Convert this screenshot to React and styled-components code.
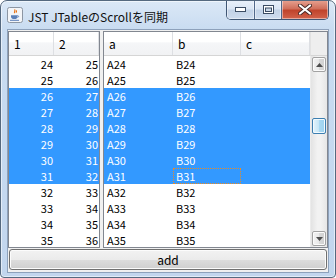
import styled, { createGlobalStyle } from 'styled-components'

const GlobalStyle = createGlobalStyle`
  html, body { margin: 0; padding: 0; background: #fff; }
  body {
    font-family: 'Noto Sans CJK JP', 'Noto Sans', sans-serif;
    font-size: 12px; color: #000;
  }
  * { box-sizing: border-box; }
`

const Frame = styled.div`
  width: 336px; height: 278px;
  display: flex; flex-direction: column;
  padding: 0 6px 4px 6px;
  border: 1px solid #55697f; border-radius: 7px 7px 4px 4px;
  background: linear-gradient(180deg, #dbe8f6 0px, #c9dcf1 28px, #c2d6ee 100%);
  box-shadow: inset 0 0 0 1px rgba(255,255,255,0.55);
  overflow: hidden;
`
const TitleBar = styled.div`
  height: 28px; flex: none;
  display: flex; align-items: center;
`
const AppIcon = styled.svg`
  width: 16px; height: 16px; flex: none;
  align-self: flex-start; margin-top: 6px;
`
const Title = styled.span`
  margin-left: 5px; margin-top: 2px;
  font-size: 12px; color: #101010; white-space: nowrap;
`
const Caption = styled.div`
  margin-left: auto; margin-right: 0px;
  align-self: flex-start; margin-top: -1px;
  display: flex; height: 20px;
  border: 1px solid #3f5674; border-top: none;
  border-radius: 0 0 5px 5px; overflow: hidden;
`
const CapBtn = styled.div`
  width: ${p => p.$w}px; height: 100%;
  display: flex; align-items: center; justify-content: center;
  border-left: ${p => (p.$first ? 'none' : '1px solid #51688a')};
  background: ${p => p.$close
    ? 'linear-gradient(180deg, #e8a493 0%, #d0705c 45%, #c0442c 55%, #d2634b 100%)'
    : 'linear-gradient(180deg, #eaf1fa 0%, #dbe6f4 45%, #c3d3e7 55%, #cedcee 100%)'};
  box-shadow: inset 0 0 0 1px rgba(255,255,255,0.45);
`

const Client = styled.div`
  flex: 1;
  display: flex; flex-direction: column; gap: 1px;
  padding: 1px 0 2px;
  border: 1px solid #8da1bb;
  background: #f0f0f0;
`
const TablesRow = styled.div`
  height: 217px; flex: none;
  display: flex; gap: 3px;
`
const Pane = styled.div`
  width: ${p => (p.$w ? `${p.$w}px` : 'auto')};
  flex: ${p => (p.$w ? 'none' : '1')};
  display: grid;
  grid-template-columns: ${p => (p.$scroll ? '1fr 17px' : '1fr')};
  grid-template-rows: 24px 1fr;
  border: 1px solid #828790;
  background: #fff;
  overflow: hidden;
`
const HeaderRow = styled.div`
  display: grid;
  grid-template-columns: ${p => p.$cols};
  border-bottom: 1px solid #d5d5d5;
  background: linear-gradient(180deg, #ffffff 0%, #ffffff 45%, #f5f6f8 46%, #f1f2f4 100%);
`
const HeadCell = styled.div`
  padding-left: 5px;
  line-height: 23px; font-size: 12px;
  border-right: 1px solid #dddfe3;
`
const Corner = styled.div`
  background: #eeeeee;
  border-bottom: 1px solid #d5d5d5;
  border-left: 1px solid #e2e2e2;
`
const Body = styled.div`
  overflow: hidden;
`
const Row = styled.div`
  height: 16px;
  display: grid;
  grid-template-columns: ${p => p.$cols};
  background: ${p => (p.$sel ? '#3399ff' : '#fff')};
  color: ${p => (p.$sel ? '#fff' : '#000')};
`
const Cell = styled.div`
  padding: ${p => (p.$num ? '0 1px 0 0' : '0 0 0 3px')};
  text-align: ${p => (p.$num ? 'right' : 'left')};
  font-size: 11px; line-height: 16px;
  white-space: nowrap;
  outline: ${p => (p.$focus ? '1px dotted #f08a1c' : 'none')};
  outline-offset: -1px;
`

const ScrollBar = styled.div`
  display: flex; flex-direction: column;
  padding: 1px;
  background: linear-gradient(90deg, #e3e3e3 0%, #f2f2f2 40%, #f2f2f2 60%, #e6e6e6 100%);
  border-left: 1px solid #ececec;
`
const ArrowBtn = styled.div`
  height: 15px; flex: none;
  display: flex; align-items: center; justify-content: center;
  border: 1px solid #a2a2a2; border-radius: 2px;
  background: linear-gradient(90deg, #f3f3f3 0%, #e8e8e8 50%, #d9d9d9 51%, #d0d0d0 100%);
  box-shadow: inset 0 0 0 1px #fbfbfb;
`
const Track = styled.div`
  flex: 1;
`
const Thumb = styled.div`
  height: 16px;
  border: 1px solid #3c7fb1; border-radius: 2px;
  background: linear-gradient(90deg, #e3f4fc 0%, #c4e5f6 50%, #a9d9f2 51%, #9dd2ef 100%);
  box-shadow: inset 0 0 0 1px #f2fafe;
`

const AddButton = styled.button`
  height: 21px; flex: none;
  margin: 0 1px;
  border: 1px solid #707070; border-radius: 3px;
  background: linear-gradient(180deg, #f2f2f2 0%, #ebebeb 50%, #dddddd 51%, #cfcfcf 100%);
  box-shadow: inset 0 0 0 1px #fcfcfc;
  font-family: 'Noto Sans CJK JP', 'Noto Sans', sans-serif;
  font-size: 12px; color: #000;
  padding: 0;
`

const rows = Array.from({ length: 12 }, (_, k) => 24 + k)
const isSel = r => r >= 26 && r <= 31

const JavaIcon = () => (
  <AppIcon viewBox="0 0 16 16">
    <rect x="0.5" y="0.5" width="15" height="15" rx="2" fill="#f3f5f8" stroke="#8c96a3" />
    <path d="M7.5 2.5c1.5 1.2-1 2.2.3 3.6M9.3 3.4c.8.8-.6 1.4.2 2.3" stroke="#e8751a" strokeWidth="1.2" fill="none" />
    <path d="M4 8.2h6.5v1.6c0 1.4-1.3 2.3-3.2 2.3S4 11.2 4 9.8z" fill="#5a7fb8" />
    <path d="M10.5 8.6c1.4 0 1.6 1.6 0 1.9" stroke="#5a7fb8" strokeWidth="0.9" fill="none" />
    <path d="M3 13.3h9" stroke="#5a7fb8" strokeWidth="1" />
  </AppIcon>
)

const MinGlyph = () => (
  <svg width="11" height="5" viewBox="0 0 11 5">
    <rect x="0.5" y="0.5" width="10" height="4" fill="#fff" stroke="#3b4c63" />
  </svg>
)
const MaxGlyph = () => (
  <svg width="11" height="9" viewBox="0 0 11 9">
    <rect x="0.5" y="0.5" width="10" height="8" fill="#fff" stroke="#3b4c63" />
    <rect x="2.5" y="3" width="6" height="3.5" fill="#c9d6e6" stroke="#3b4c63" />
  </svg>
)
const CloseGlyph = () => (
  <svg width="14" height="11" viewBox="0 0 14 11">
    <path d="M2 1.5l10 8M12 1.5l-10 8" stroke="#4a2b28" strokeWidth="4" strokeLinecap="round" />
    <path d="M2 1.5l10 8M12 1.5l-10 8" stroke="#fff" strokeWidth="2.2" strokeLinecap="round" />
  </svg>
)

const UpArrow = () => (
  <svg width="7" height="4" viewBox="0 0 7 4"><path d="M0 4L3.5 0L7 4z" fill="#4d4d4d" /></svg>
)
const DownArrow = () => (
  <svg width="7" height="4" viewBox="0 0 7 4"><path d="M0 0L3.5 4L7 0z" fill="#4d4d4d" /></svg>
)

export default function App() {
  const leftCols = '45px 45px'
  const rightCols = '69px 68px 69px'
  return (
    <>
      <GlobalStyle />
      <Frame>
        <TitleBar>
          <JavaIcon />
          <Title>JST JTableのScrollを同期</Title>
          <Caption>
            <CapBtn $w={27} $first><MinGlyph /></CapBtn>
            <CapBtn $w={27}><MaxGlyph /></CapBtn>
            <CapBtn $w={47} $close><CloseGlyph /></CapBtn>
          </Caption>
        </TitleBar>
        <Client>
          <TablesRow>
            <Pane $w={92}>
              <HeaderRow $cols={leftCols}>
                <HeadCell>1</HeadCell>
                <HeadCell>2</HeadCell>
              </HeaderRow>
              <Body>
                {rows.map(r => (
                  <Row key={r} $cols={leftCols} $sel={isSel(r)}>
                    <Cell $num>{r}</Cell>
                    <Cell $num>{r + 1}</Cell>
                  </Row>
                ))}
              </Body>
            </Pane>
            <Pane $scroll>
              <HeaderRow $cols={rightCols}>
                <HeadCell>a</HeadCell>
                <HeadCell>b</HeadCell>
                <HeadCell>c</HeadCell>
              </HeaderRow>
              <Corner />
              <Body>
                {rows.map(r => (
                  <Row key={r} $cols={rightCols} $sel={isSel(r)}>
                    <Cell>A{r}</Cell>
                    <Cell $focus={r === 31}>B{r}</Cell>
                    <Cell />
                  </Row>
                ))}
              </Body>
              <ScrollBar>
                <ArrowBtn><UpArrow /></ArrowBtn>
                <Track>
                  <Thumb style={{ marginTop: 46 }} />
                </Track>
                <ArrowBtn><DownArrow /></ArrowBtn>
              </ScrollBar>
            </Pane>
          </TablesRow>
          <AddButton>add</AddButton>
        </Client>
      </Frame>
    </>
  )
}
